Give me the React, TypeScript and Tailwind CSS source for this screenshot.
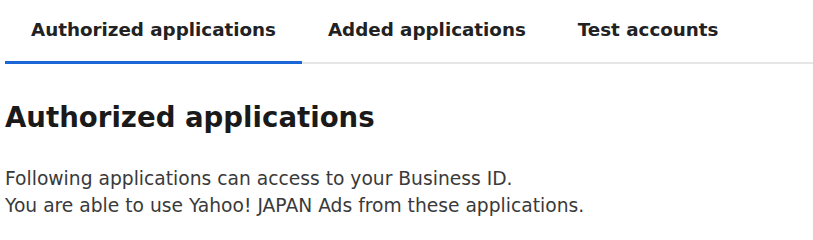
import React from 'react';

const tabs = ['Authorized applications', 'Added applications', 'Test accounts'];

export default function App() {
    const active = 0;

    return (
        <div className="bg-white pl-[5px] pt-[13px] text-[#222]" style={{ fontFamily: '"DejaVu Sans", "Noto Sans CJK JP", sans-serif' }}>
            {/* Tabs */}
            <div className="flex border-b-2 border-[#e6e6e6]">
                {tabs.map((tab, i) => (
                    <button
                        key={tab}
                        className={`-mb-[2px] px-[26px] pb-[15px] text-[18.3px] font-bold leading-[33px] ${
                            i === active ? 'border-b-[3px] border-[#1a66d6]' : 'border-b-[3px] border-transparent'
                        }`}
                    >
                        {tab}
                    </button>
                ))}
            </div>

            {/* Heading */}
            <h1 className="mt-[34px] text-[27.6px] font-bold leading-[40px] text-[#1a1a1a]">Authorized applications</h1>

            {/* Description */}
            <div className="mt-[27px] text-[18.7px] leading-[27px] text-[#3a3a3a]">
                <p>Following applications can access to your Business ID.</p>
                <p>You are able to use Yahoo! JAPAN Ads from these applications.</p>
            </div>
        </div>
    );
}
